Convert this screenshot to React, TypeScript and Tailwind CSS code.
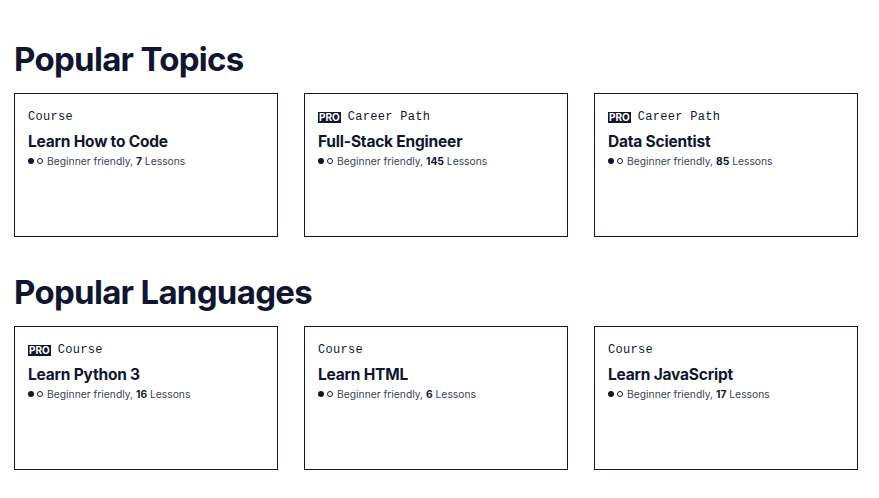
import React from 'react';

type Item = { pro?: boolean; kind: string; title: string; lessons: number };

const topics: Item[] = [
  { kind: 'Course', title: 'Learn How to Code', lessons: 7 },
  { pro: true, kind: 'Career Path', title: 'Full-Stack Engineer', lessons: 145 },
  { pro: true, kind: 'Career Path', title: 'Data Scientist', lessons: 85 },
];

const languages: Item[] = [
  { pro: true, kind: 'Course', title: 'Learn Python 3', lessons: 16 },
  { kind: 'Course', title: 'Learn HTML', lessons: 6 },
  { kind: 'Course', title: 'Learn JavaScript', lessons: 17 },
];

const Card = ({ pro, kind, title, lessons }: Item) => (
  <div className="w-[264px] h-[144px] border border-[#10162f] px-[13px] pt-[16px]">
    <div className="flex items-center gap-[7px] h-[14px]">
      {pro && (
        <span className="bg-[#10162f] text-white text-[10px] font-bold leading-[11px] px-[1px] font-['Inter',sans-serif]">
          PRO
        </span>
      )}
      <span className="text-[12px] font-['Liberation_Mono',monospace] tracking-[0.3px]">{kind}</span>
    </div>
    <div className="mt-[8px] text-[15.5px] font-bold leading-[20px] tracking-[-0.2px]">{title}</div>
    <div className="mt-[2px] flex items-center text-[10.3px] leading-[14px]">
      <span className="w-[6px] h-[6px] rounded-full bg-[#10162f]" />
      <span className="ml-[3px] w-[6px] h-[6px] rounded-full border border-[#10162f]" />
      <span className="ml-[4px] text-[#3b3f56]">Beginner friendly,&nbsp;</span>
      <span className="font-bold">{lessons}</span>
      <span className="text-[#3b3f56]">&nbsp;Lessons</span>
    </div>
  </div>
);

const Section = ({ title, items }: { title: string; items: Item[] }) => (
  <section>
    <h2 className="text-[33px] font-bold leading-[40px] tracking-[-0.7px] mb-[14px]">{title}</h2>
    <div className="flex gap-[26px]">
      {items.map((it) => (
        <Card key={it.title} {...it} />
      ))}
    </div>
  </section>
);

export default function App() {
  return (
    <div className="min-h-screen bg-white text-[#10162f] font-['Inter',sans-serif] px-[14px] pt-[39px]">
      <div className="flex flex-col gap-[35px]">
        <Section title="Popular Topics" items={topics} />
        <Section title="Popular Languages" items={languages} />
      </div>
    </div>
  );
}
